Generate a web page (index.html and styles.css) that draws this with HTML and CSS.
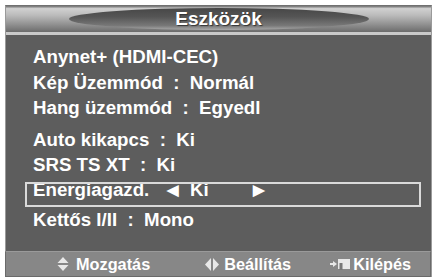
FILE: index.html
```html
<!DOCTYPE html>
<html>
<head>
<meta charset="utf-8">
<link rel="stylesheet" href="styles.css">
</head>
<body>
<div class="screen">
  <div class="header">
    <div class="pill"><span class="title">Eszközök</span></div>
  </div>
  <div class="body">
    <div class="row r1">Anynet+ (HDMI-CEC)</div>
    <div class="row r2">Kép Üzemmód  :  Normál</div>
    <div class="row r3">Hang üzemmód  :  Egyedl</div>
    <div class="row r4">Auto kikapcs  :  Ki</div>
    <div class="row r5">SRS TS XT  :  Ki</div>
    <div class="row r6 sel"><span class="lbl">Energiagazd.</span><span class="arr">&#9664;</span><span class="val">Ki</span><span class="arr">&#9654;</span></div>
    <div class="row r7">Kettős I/II  :  Mono</div>
  </div>
  <div class="footer">
    <div class="item i1">
      <svg width="12" height="14" viewBox="0 0 12 14"><path d="M6 0 L11.5 6 L0.5 6 Z" fill="#e8e8e8"/><path d="M0.5 8 L11.5 8 L6 14 Z" fill="#e8e8e8"/></svg>
      <span>Mozgatás</span>
    </div>
    <div class="item i2">
      <svg width="14" height="13" viewBox="0 0 14 13"><path d="M6 0 L0 6.5 L6 13 Z" fill="#e8e8e8"/><path d="M8 0 L14 6.5 L8 13 Z" fill="#e8e8e8"/></svg>
      <span>Beállítás</span>
    </div>
    <div class="item i3">
      <svg width="21" height="14" viewBox="0 0 21 14"><rect x="0" y="6" width="3" height="2" fill="#e8e8e8"/><path d="M3 4 L7 7 L3 10 Z" fill="#e8e8e8"/><rect x="8" y="2" width="12" height="10" fill="#e8e8e8"/><rect x="9.5" y="6" width="3" height="7" fill="#777"/></svg>
      <span>Kilépés</span>
    </div>
  </div>
</div>
</body>
</html>
```
FILE: styles.css
```css
html, body {
  margin: 0;
  padding: 0;
  background: #ffffff;
}
body {
  padding: 5px 4px 0 5px;
  font-family: "Liberation Sans", Arial, sans-serif;
  font-weight: bold;
}
.screen {
  width: 425px;
  height: 271px;
  background: #5d5d5d;
  border-left: 1px solid #9a9a9a;
  border-right: 1px solid #9a9a9a;
  border-top: 1px solid #707070;
  display: flex;
  flex-direction: column;
}
.header {
  height: 26px;
  background: linear-gradient(#6e6e6e 0%, #d0d0d0 10%, #bcbcbc 35%, #989898 65%, #6c6c6c 100%);
  border-bottom: 3px solid #cacaca;
  display: flex;
  justify-content: center;
  align-items: center;
}
.pill {
  width: 300px;
  height: 22px;
  border-radius: 150px / 11px;
  background: linear-gradient(#474747 0%, #555555 40%, #787878 80%, #aaaaaa 100%);
  display: flex;
  justify-content: center;
  align-items: center;
}
.title {
  color: #ffffff;
  font-size: 19px;
  text-shadow: 1px 1px 1px #333;
  line-height: 22px;
}
.body {
  flex: 1;
  padding: 9px 0 0 27px;
  display: flex;
  flex-direction: column;
}
.row {
  height: 25px;
  line-height: 25px;
  font-size: 18.7px;
  color: #ffffff;
  white-space: pre;
}
.r2 { margin-top: 1px; }
.r4 { margin-top: 7px; }
.r7 { margin-top: 5px; }
.sel {
  position: relative;
  display: flex;
}
.sel::after {
  content: "";
  position: absolute;
  left: -8px;
  top: 5px;
  width: 392px;
  height: 21px;
  border: 2px solid #dadada;
}
.lbl { width: 134px; }
.arr { font-size: 15px; width: 23px; }
.val { width: 63px; }
.footer {
  height: 24px;
  margin: 1px 0 0 -1px;
  background: #878787;
  border: 1px solid #6a6a6a;
  border-top-color: #9a9a9a;
  display: flex;
  align-items: center;
  color: #ffffff;
  font-size: 16.3px;
}
.item {
  display: flex;
  align-items: center;
  gap: 7px;
}
.i1 { margin-left: 51px; }
.i2 { margin-left: 55px; gap: 5px; }
.i3 { margin-left: 39px; gap: 2px; }
```
